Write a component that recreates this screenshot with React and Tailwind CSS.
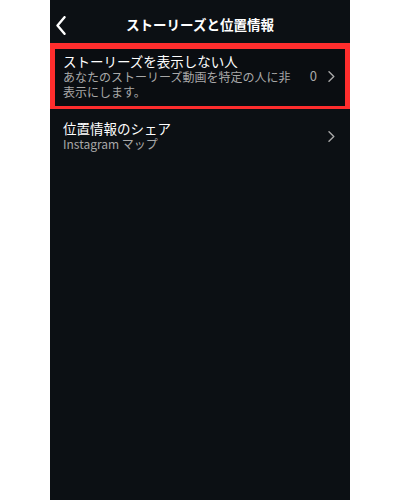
import React from "react";

const font = { fontFamily: '"Noto Sans CJK JP", "Noto Sans", sans-serif' };

function Chevron() {
  return (
    <svg width="7" height="11" viewBox="0 0 7 11" fill="none">
      <path d="M1 0.8 L5.8 5.5 L1 10.2" stroke="#a8a8a8" strokeWidth="1.4" strokeLinecap="round" strokeLinejoin="round" />
    </svg>
  );
}

export default function App() {
  return (
    <div className="w-[400px] h-[500px] bg-white flex justify-center" style={font}>
      <div className="w-[300px] h-full bg-[#0c1014] flex flex-col">
        <div className="h-[43px] relative flex items-center justify-center">
          <svg className="absolute left-[6px] top-[16px]" width="10" height="19" viewBox="0 0 10 19" fill="none">
            <path d="M8.5 1.2 L1.5 9.5 L8.5 17.8" stroke="#ffffff" strokeWidth="2.4" strokeLinecap="round" strokeLinejoin="round" />
          </svg>
          <span className="text-white font-bold text-[13.5px] leading-none mt-[6px]">ストーリーズと位置情報</span>
        </div>
        <div className="border-[#ff2d2d] border-t-[6px] border-l-[5px] border-r-[5px] border-b-[3px] bg-[#0a0d11] flex items-center pl-[8px] pr-[10px] pt-[4px] pb-[7px]">
          <div className="flex-1 flex flex-col">
            <span className="text-white text-[13.5px] leading-[16px]">ストーリーズを表示しない人</span>
            <span className="text-[#a8a8a8] text-[12px] leading-[15px] w-[232px]">あなたのストーリーズ動画を特定の人に非表示にします。</span>
          </div>
          <span className="text-[#a8a8a8] text-[13px] mr-[11px]">0</span>
          <Chevron />
        </div>
        <div className="flex items-center pl-[13px] pr-[15px] pt-[11px]">
          <div className="flex-1 flex flex-col">
            <span className="text-white text-[13.5px] leading-[16px]">位置情報のシェア</span>
            <span className="text-[#a8a8a8] text-[12px] leading-[16px]">Instagram マップ</span>
          </div>
          <Chevron />
        </div>
      </div>
    </div>
  );
}
